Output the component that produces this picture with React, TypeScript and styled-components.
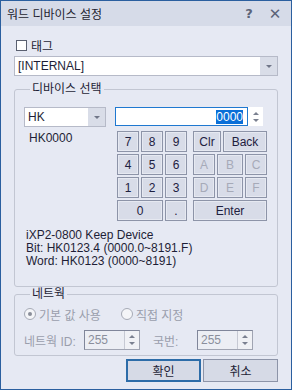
import * as React from "react";
import styled, { createGlobalStyle } from "styled-components";

const GlobalStyle = createGlobalStyle`
  html, body {
    margin: 0;
    padding: 0;
    background: #e6e9f3;
  }
  body {
    font-family: "Liberation Sans", "Noto Sans CJK KR", sans-serif;
    font-size: 12px;
    color: #1e1e36;
  }
  * { box-sizing: border-box; }
`;

const Window = styled.div`
  width: 292px;
  height: 390px;
  border: 1px solid #2b5f9f;
  background: #e6e9f3;
  display: flex;
  flex-direction: column;
`;

const TitleBar = styled.div`
  height: 25px;
  background: #d6dbe8;
  display: flex;
  align-items: center;
  padding: 0 0 0 6px;
  font-size: 12px;
  color: #1e1e30;
`;

const Title = styled.span`
  flex: 1;
`;

const TitleButton = styled.span`
  width: 26px;
  text-align: center;
  color: #5c6478;
  font-size: 13px;
  font-weight: bold;
  font-family: "DejaVu Sans", sans-serif;
  &:last-child { margin-right: 3px; font-weight: normal; font-size: 15px; }
`;

const Body = styled.div`
  flex: 1;
  padding: 0 13px;
  display: flex;
  flex-direction: column;
`;

const CheckRow = styled.label`
  display: flex;
  align-items: center;
  gap: 4px;
  margin: 13px 0 0 2px;
  height: 12px;
`;

const CheckBox = styled.span`
  width: 11px;
  height: 11px;
  border: 1px solid #5a6070;
  background: #fff;
`;

const Combo = styled.div<{ $width?: number }>`
  height: 20px;
  width: ${p => (p.$width ? `${p.$width}px` : "auto")};
  border: 1px solid #b6bac8;
  background: #fff;
  display: flex;
  align-items: stretch;
`;

const ComboText = styled.span`
  flex: 1;
  padding-left: 3px;
  line-height: 18px;
`;

const ComboButton = styled.span`
  width: 17px;
  background: #d9dde8;
  display: flex;
  align-items: center;
  justify-content: center;
  &::after {
    content: "";
    border-left: 3px solid transparent;
    border-right: 3px solid transparent;
    border-top: 3px solid #707688;
  }
`;

const Group = styled.fieldset<{ $padBottom: number }>`
  margin: 0;
  border: 1px solid #c2c6d2;
  border-radius: 3px;
  padding: 1px 8px ${p => p.$padBottom}px 9px;
  min-width: 0;
`;

const Legend = styled.legend`
  padding: 0 2px;
  margin-left: 6px;
  line-height: 16px;
`;

const SelectRow = styled.div`
  display: flex;
  gap: 9px;
  margin-top: 9px;
`;

const LeftCol = styled.div`
  display: flex;
  flex-direction: column;
  gap: 3px;
`;

const DeviceLabel = styled.span`
  padding-left: 5px;
  line-height: 16px;
`;

const RightCol = styled.div`
  display: flex;
  flex-direction: column;
  gap: 5px;
`;

const ValueRow = styled.div`
  display: flex;
  height: 19px;
`;

const ValueInput = styled.div`
  width: 133px;
  border: 1px solid #1f78d0;
  background: #fff;
  display: flex;
  justify-content: flex-end;
  align-items: center;
  padding-right: 4px;
`;

const Selected = styled.span`
  background: #0a6fd8;
  color: #fff;
  line-height: 14px;
`;

const Spin = styled.span<{ $disabled?: boolean }>`
  width: 15px;
  display: flex;
  flex-direction: column;
  align-items: center;
  justify-content: center;
  gap: 4px;
  background: ${p => (p.$disabled ? "#f0f1f5" : "#fff")};
  border-left: ${p => (p.$disabled ? "1px solid #c6c9d3" : "none")};
  &::before, &::after {
    content: "";
    border-left: 3px solid transparent;
    border-right: 3px solid transparent;
  }
  &::before { border-bottom: 3px solid #7a8090; }
  &::after { border-top: 3px solid #7a8090; }
`;

const Keypad = styled.div`
  display: flex;
  gap: 6px;
  margin-left: 2px;
`;

const Grid = styled.div<{ $cols: string }>`
  display: grid;
  grid-template-columns: ${p => p.$cols};
  grid-auto-rows: 21px;
  column-gap: 2px;
  row-gap: 2px;
`;

const Key = styled.button<{ $span?: number; $disabled?: boolean }>`
  grid-column: span ${p => p.$span ?? 1};
  margin: 0;
  padding: 0;
  font: inherit;
  font-size: 12px;
  color: ${p => (p.$disabled ? "#a6aab8" : "#1e2040")};
  background: #d8dce8;
  border: 1px solid #8d94a8;
  box-shadow: inset 0 0 0 1px #e6e9f1;
`;

const InfoText = styled.div`
  margin-top: 8px;
  padding-left: 2px;
`;

const InfoLine = styled.div`
  height: 13px;
  line-height: 13px;
  white-space: nowrap;
`;

const NetGroupWrap = styled.div`
  margin-top: -1px;
`;

const RadioRow = styled.div`
  display: flex;
  gap: 20px;
  color: #9a9eac;
  margin-top: 3px;
  height: 16px;
  align-items: center;
`;

const RadioItem = styled.span`
  display: flex;
  align-items: center;
  gap: 3px;
`;

const Radio = styled.span<{ $checked?: boolean }>`
  width: 12px;
  height: 12px;
  border-radius: 50%;
  border: 1px solid #a6aab6;
  background: #f4f5f8;
  display: flex;
  align-items: center;
  justify-content: center;
  &::after {
    content: "";
    width: 4px;
    height: 4px;
    border-radius: 50%;
    background: ${p => (p.$checked ? "#8a8e9a" : "transparent")};
  }
`;

const NetRow = styled.div`
  display: flex;
  align-items: center;
  margin-top: 8px;
  color: #9a9eac;
`;

const NetLabel = styled.span<{ $width: number; $indent?: number }>`
  width: ${p => p.$width}px;
  padding-left: ${p => p.$indent ?? 0}px;
`;

const NumBox = styled.div`
  width: 56px;
  height: 20px;
  display: flex;
  border: 1px solid #a0a4b2;
  border-top-color: #80869a;
  border-left-color: #80869a;
  background: #eceef4;
`;

const NumText = styled.span`
  flex: 1;
  padding-left: 3px;
  line-height: 18px;
  color: #8a8e9c;
`;

const ButtonRow = styled.div`
  display: flex;
  justify-content: flex-end;
  gap: 2px;
  margin-top: 3px;
`;

const DialogButton = styled.button<{ $primary?: boolean }>`
  width: 75px;
  height: 23px;
  margin: 0;
  padding: 0;
  font: inherit;
  color: #1e1e36;
  background: #d6dae6;
  border: ${p => (p.$primary ? "2px solid #2d6ca8" : "1px solid #8d94a8")};
`;

const Spacer = styled.div<{ $h: number }>`
  height: ${p => p.$h}px;
`;

export default function App() {
  const digits = ["7", "8", "9", "4", "5", "6", "1", "2", "3"];
  return (
    <>
      <GlobalStyle />
      <Window>
        <TitleBar>
          <Title>워드 디바이스 설정</Title>
          <TitleButton>?</TitleButton>
          <TitleButton>✕</TitleButton>
        </TitleBar>
        <Body>
          <CheckRow>
            <CheckBox />
            태그
          </CheckRow>
          <Spacer $h={5} />
          <Combo>
            <ComboText>[INTERNAL]</ComboText>
            <ComboButton />
          </Combo>
          <Spacer $h={5} />
          <Group $padBottom={18}>
            <Legend>디바이스 선택</Legend>
            <SelectRow>
              <LeftCol>
                <Combo $width={82}>
                  <ComboText>HK</ComboText>
                  <ComboButton />
                </Combo>
                <DeviceLabel>HK0000</DeviceLabel>
              </LeftCol>
              <RightCol>
                <ValueRow>
                  <ValueInput>
                    <Selected>0000</Selected>
                  </ValueInput>
                  <Spin />
                </ValueRow>
                <Keypad>
                  <Grid $cols="22px 22px 22px">
                    {digits.map(d => (
                      <Key key={d}>{d}</Key>
                    ))}
                    <Key $span={2}>0</Key>
                    <Key>.</Key>
                  </Grid>
                  <Grid $cols="22px 4px 2px 16px 22px">
                    <Key $span={2}>Clr</Key>
                    <Key $span={3}>Back</Key>
                    <Key $disabled>A</Key>
                    <Key $disabled $span={3}>B</Key>
                    <Key $disabled>C</Key>
                    <Key $disabled>D</Key>
                    <Key $disabled $span={3}>E</Key>
                    <Key $disabled>F</Key>
                    <Key $span={5}>Enter</Key>
                  </Grid>
                </Keypad>
              </RightCol>
            </SelectRow>
            <InfoText>
              <InfoLine>iXP2-0800 Keep Device</InfoLine>
              <InfoLine>Bit: HK0123.4 (0000.0~8191.F)</InfoLine>
              <InfoLine>Word: HK0123 (0000~8191)</InfoLine>
            </InfoText>
          </Group>
          <NetGroupWrap>
            <Group $padBottom={5}>
              <Legend>네트웍</Legend>
              <RadioRow>
                <RadioItem>
                  <Radio $checked />
                  기본 값 사용
                </RadioItem>
                <RadioItem>
                  <Radio />
                  직접 지정
                </RadioItem>
              </RadioRow>
              <NetRow>
                <NetLabel $width={60}>네트웍 ID:</NetLabel>
                <NumBox>
                  <NumText>255</NumText>
                  <Spin $disabled />
                </NumBox>
                <NetLabel $width={57} $indent={13}>국번:</NetLabel>
                <NumBox>
                  <NumText>255</NumText>
                  <Spin $disabled />
                </NumBox>
              </NetRow>
            </Group>
          </NetGroupWrap>
          <ButtonRow>
            <DialogButton $primary>확인</DialogButton>
            <DialogButton>취소</DialogButton>
          </ButtonRow>
        </Body>
      </Window>
    </>
  );
}
